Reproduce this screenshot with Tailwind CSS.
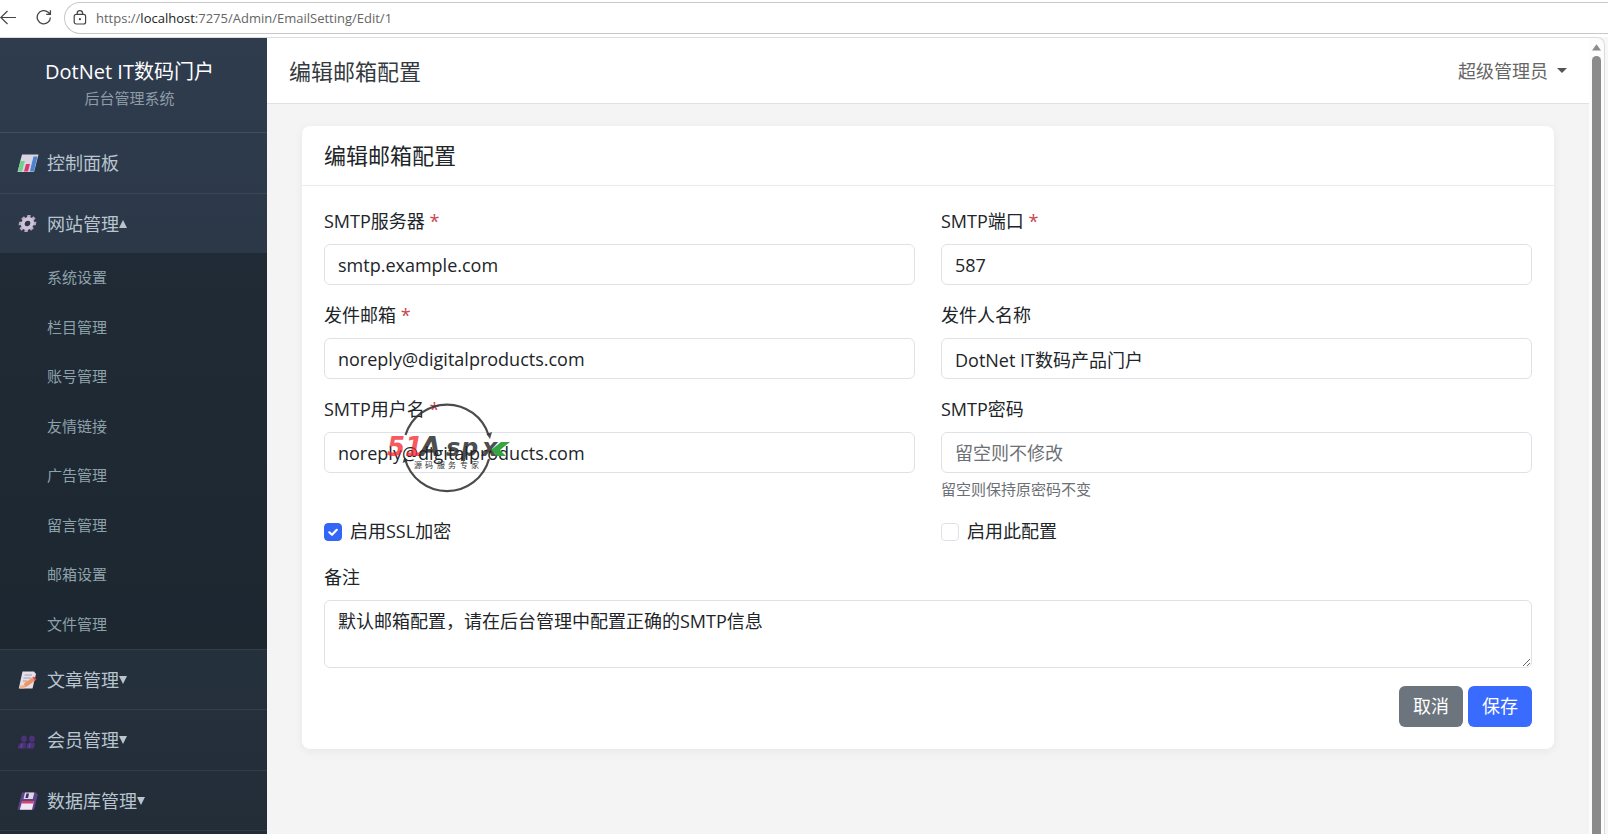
<!DOCTYPE html>
<html lang="zh-CN">
<head>
    <meta charset="UTF-8">
    <meta name="viewport" content="width=device-width, initial-scale=1.0">
    <title>编辑邮箱配置 - DotNet IT数码门户</title>
    <script src="https://cdn.jsdelivr.net/npm/@tailwindcss/browser@4"></script>
    <style>
        body {
            font-family: 'Open Sans', 'Noto Sans CJK SC', sans-serif;
        }
    </style>
</head>
<body class="flex h-screen flex-col overflow-hidden bg-white text-[#212529]">

    <!-- Browser toolbar -->
    <div class="flex h-[37px] shrink-0 items-start pt-[2px]">
        <button type="button" aria-label="Back" class="mt-[7px] h-4 w-4">
            <svg class="h-4 w-4" viewBox="0 0 16 16" fill="none" stroke="#444" stroke-width="1.2"><path d="M16 8.5H0.8M7.5 2L0.8 8.5L7.5 15"/></svg>
        </button>
        <button type="button" aria-label="Refresh" class="mt-[7px] ml-5 h-4 w-4">
            <svg class="h-4 w-4" viewBox="0 0 16 16" fill="none" stroke="#444" stroke-width="1.3"><path d="M14.4 8.5A6.6 6.6 0 1 1 12.2 3.3L14.2 5.2M14.4 1.2V5.4H10.2"/></svg>
        </button>
        <div class="ml-3 flex h-8 flex-1 items-center rounded-l-full border border-r-0 border-[#c8c8c8] pl-[7px]">
            <svg class="h-4 w-4" viewBox="0 0 16 16" fill="none" stroke="#444" stroke-width="1.2"><rect x="2.2" y="4.4" width="11.4" height="9.6" rx="2"/><path d="M5.2 4.4V3.4A2.7 2.7 0 0 1 10.6 3.4V4.4"/><circle cx="7.9" cy="9.2" r="0.5" fill="#444"/></svg>
            <span class="ml-2 text-[13px] leading-5 text-[#666]">https://<span class="text-[#222]">localhost</span>:7275/Admin/EmailSetting/Edit/1</span>
        </div>
    </div>

    <div class="flex min-h-0 flex-1 bg-[#f7f7f7] pr-[3px]">
        <div class="flex min-w-0 flex-1 overflow-hidden rounded-tr-lg border-t border-r border-[#dcdcdc] bg-[#fcfcfc]">

            <!-- Sidebar -->
            <aside class="w-[267px] shrink-0 overflow-hidden bg-linear-to-b from-[#2f3c4e] to-[#222d38] text-lg text-[#b8c5cf]">
                <div class="flex h-[95px] flex-col border-b border-white/10 pt-5 pr-2 text-center">
                    <div class="text-xl leading-7 text-white">DotNet IT数码门户</div>
                    <div class="text-[15px] leading-6 text-[#8f9ca8]">后台管理系统</div>
                </div>
                <nav>
                    <a href="#" class="flex h-[61px] items-center gap-2 border-b border-white/7 pl-[17px]">
                        <svg class="h-[22px] w-[22px]" viewBox="0 0 22 22"><path d="M5 2.5H21.5L17 20H0.5Z" fill="#d9d4e2"/><path d="M3.5 9H7.8L5 19.5H0.8Z" fill="#6fd08a"/><path d="M9 12H13L11 19.5H7Z" fill="#d8386f"/><path d="M16.5 4.5H20.5L16.8 19.5H12.8Z" fill="#4a83cf"/></svg>
                        <span>控制面板</span>
                    </a>
                    <a href="#" class="flex h-[59px] items-center gap-2 pl-[17px]">
                        <svg class="h-[22px] w-[22px]" viewBox="0 0 22 22"><g transform="translate(10.5 10.5) skewX(-10)"><g stroke="#b7a8c6" stroke-width="3.4"><path d="M0 -8.6V8.6M-8.6 0H8.6M-6 -6L6 6M-6 6L6 -6"/></g><circle r="4.6" fill="none" stroke="#cdc2d6" stroke-width="3.6"/><circle r="2.7" fill="#2b3848"/></g></svg>
                        <span>网站管理<span class="mb-1 inline-block h-0 w-0 border-x-4 border-b-8 border-x-transparent border-b-[#b8c5cf] align-middle"></span></span>
                    </a>
                    <div class="grid h-[396px] grid-rows-8 items-center bg-[#141d24]/50 pl-[47px] text-[15px] text-[#8ea1ab]">
                        <a href="#">系统设置</a>
                        <a href="#">栏目管理</a>
                        <a href="#">账号管理</a>
                        <a href="#">友情链接</a>
                        <a href="#">广告管理</a>
                        <a href="#">留言管理</a>
                        <a href="#">邮箱设置</a>
                        <a href="#">文件管理</a>
                    </div>
                    <a href="#" class="flex h-[61px] items-center gap-2 border-y border-white/7 pl-[17px]">
                        <svg class="h-[22px] w-[22px]" viewBox="0 0 22 22"><path d="M5.5 2.5H17L19 5L15.5 19.5H1.8Z" fill="#e6dfe9"/><path d="M7.5 6H15M6.5 9H14M5.8 12H10" stroke="#a79ab5" stroke-width="1"/><path d="M6 18.5L7.5 14L15.5 8.5L18 11.5L10 17.5Z" fill="#ef9560"/><path d="M15.5 8.5L17 7.5L19.5 10.5L18 11.5Z" fill="#d9465d"/><path d="M2.5 17L8 15.5L7.5 19.5H3Z" fill="#f0b48a"/></svg>
                        <span>文章管理<span class="mb-1 inline-block h-0 w-0 border-x-4 border-t-8 border-x-transparent border-t-[#b8c5cf] align-middle"></span></span>
                    </a>
                    <a href="#" class="flex h-[61px] items-center gap-2 border-b border-white/7 pl-[17px]">
                        <svg class="h-[22px] w-[22px]" viewBox="0 0 22 22" fill="#4b3279"><ellipse cx="7" cy="9.8" rx="2.8" ry="3.2"/><ellipse cx="15" cy="9.8" rx="2.8" ry="3.2"/><path d="M2 15Q5 12.5 9 14L8.3 19.5H0.4Z"/><path d="M10 15Q13 12.5 18 14.2L16.8 19.5H9Z"/><path d="M5 14.5L4 19M13 14.5L12 19" stroke="#6242a0" stroke-width="1.4"/></svg>
                        <span>会员管理<span class="mb-1 inline-block h-0 w-0 border-x-4 border-t-8 border-x-transparent border-t-[#b8c5cf] align-middle"></span></span>
                    </a>
                    <a href="#" class="flex h-[60px] items-center gap-2 border-b border-white/7 pl-[17px]">
                        <svg class="h-[22px] w-[22px]" viewBox="0 0 22 22"><path d="M5 2.5H19L20.8 4.5L17 19.8H0.5Z" fill="#5d438a"/><path d="M8 2.5H17.3L15.8 9H6.5Z" fill="#ddd7e6"/><path d="M9.5 3.5H12L11 8H8.4Z" fill="#3d2a66"/><path d="M5.2 11H17L15 19.8H2.8Z" fill="#efe8f4"/><path d="M5.2 11H17L16.4 13.5H4.6Z" fill="#d6456b"/></svg>
                        <span>数据库管理<span class="mb-1 inline-block h-0 w-0 border-x-4 border-t-8 border-x-transparent border-t-[#b8c5cf] align-middle"></span></span>
                    </a>
                </nav>
            </aside>

            <!-- Main content -->
            <main class="min-w-0 flex-1 bg-[#f4f4f4]">
                <header class="flex h-[66px] items-center justify-between border-b border-[#dee2e6] bg-white px-[22px]">
                    <h1 class="text-[22px] leading-8 text-[#343a40]">编辑邮箱配置</h1>
                    <button type="button" class="flex items-center gap-[9px] text-lg text-[#666]">
                        超级管理员
                        <span class="h-0 w-0 border-x-[5px] border-t-[5px] border-x-transparent border-t-[#555]"></span>
                    </button>
                </header>

                <div class="px-[35px] pt-[22px]">
                    <section class="rounded-lg bg-white shadow-[0_2px_10px_rgba(0,0,0,0.06)]">
                        <div class="flex h-[60px] items-center border-b border-[#ebebeb] px-[22px]">
                            <h2 class="text-[22px]">编辑邮箱配置</h2>
                        </div>
                        <form class="px-[22px] py-[22px] text-lg leading-[27px]">
                            <div class="grid grid-cols-2 gap-x-[26px] gap-y-[17px]">
                                <div>
                                    <label for="host" class="mb-[9px] block">SMTP服务器 <span class="text-[#c8454f]">*</span></label>
                                    <input id="host" type="text" value="smtp.example.com" class="block h-[41px] w-full rounded-md border border-[#dee2e6] px-[13px]">
                                </div>
                                <div>
                                    <label for="port" class="mb-[9px] block">SMTP端口 <span class="text-[#c8454f]">*</span></label>
                                    <input id="port" type="text" value="587" class="block h-[41px] w-full rounded-md border border-[#dee2e6] px-[13px]">
                                </div>
                                <div>
                                    <label for="from" class="mb-[9px] block">发件邮箱 <span class="text-[#c8454f]">*</span></label>
                                    <input id="from" type="text" value="noreply@digitalproducts.com" class="block h-[41px] w-full rounded-md border border-[#dee2e6] px-[13px]">
                                </div>
                                <div>
                                    <label for="fromName" class="mb-[9px] block">发件人名称</label>
                                    <input id="fromName" type="text" value="DotNet IT数码产品门户" class="block h-[41px] w-full rounded-md border border-[#dee2e6] px-[13px]">
                                </div>
                                <div class="relative">
                                    <label for="user" class="mb-[9px] block">SMTP用户名 <span class="text-[#c8454f]">*</span></label>
                                    <input id="user" type="text" value="noreply@digitalproducts.com" class="block h-[41px] w-full rounded-md border border-[#dee2e6] px-[13px]">
                                    <!-- Watermark -->
                                    <svg class="pointer-events-none absolute top-[3px] left-[61px] h-[98px] w-[130px]" viewBox="0 0 130 98" font-family="DejaVu Sans, sans-serif" font-weight="bold" font-style="italic">
                                        <g fill="none" stroke="#333" stroke-width="2.2" opacity="0.88"><path d="M20.5 36A43.5 43.5 0 0 1 103.500 36"/><path d="M20 60A43.5 43.5 0 0 0 104 60"/></g>
                                        <path d="M101.5 35L107 33L105 40ZM17.500 64L19.500 58L23 62Z" fill="#333" opacity="0.88"/>
                                        <text x="2" y="57" font-size="26" fill="#f5222d" opacity="0.75">51</text>
                                        <text x="35" y="57" font-size="27" fill="#222" opacity="0.8">A</text>
                                        <text x="61 76 97" y="57" font-size="24" fill="#222" opacity="0.8">spx</text>
                                        <path d="M106 51L116 43H125L115 51L121 57H112Z" fill="#35a544"/>
                                        <text x="29 40 52 63 75 86" y="69" font-size="8" font-family="Noto Sans CJK SC, sans-serif" font-weight="normal" font-style="normal" fill="#333">源码服务专家</text>
                                    </svg>
                                </div>
                                <div>
                                    <label for="password" class="mb-[9px] block">SMTP密码</label>
                                    <input id="password" type="password" placeholder="留空则不修改" class="block h-[41px] w-full rounded-md border border-[#dee2e6] px-[13px] placeholder:text-[#6c7075]">
                                    <p class="mt-1 text-[15px] leading-6 text-[#6c7075]">留空则保持原密码不变</p>
                                </div>
                                <div class="flex items-center gap-2">
                                    <span class="grid place-items-center">
                                        <input id="ssl" type="checkbox" checked class="col-start-1 row-start-1 h-[18px] w-[18px] appearance-none rounded border border-[#dee2e6] checked:border-[#3366f6] checked:bg-[#3366f6]">
                                        <svg class="pointer-events-none col-start-1 row-start-1 h-[18px] w-[18px]" viewBox="0 0 18 18" fill="none" stroke="#fff" stroke-width="2.2" stroke-linecap="round" stroke-linejoin="round"><path d="M5.3 9.3L8 11.8L12.8 6.8"/></svg>
                                    </span>
                                    <label for="ssl">启用SSL加密</label>
                                </div>
                                <div class="flex items-center gap-2">
                                    <input id="enabled" type="checkbox" class="h-[18px] w-[18px] appearance-none rounded border border-[#dee2e6] checked:border-[#3366f6] checked:bg-[#3366f6]">
                                    <label for="enabled">启用此配置</label>
                                </div>
                            </div>

                            <label for="remark" class="mt-[19px] mb-[9px] block">备注</label>
                            <textarea id="remark" rows="2" class="block h-[68px] w-full rounded-md border border-[#dee2e6] px-[13px] py-[7px]">默认邮箱配置，请在后台管理中配置正确的SMTP信息</textarea>

                            <div class="mt-[18px] flex justify-end gap-[5px]">
                                <button type="button" class="h-[41px] rounded-md bg-[#6c757d] px-[14px] text-white">取消</button>
                                <button type="submit" class="h-[41px] rounded-md bg-[#3a6bff] px-[14px] text-white">保存</button>
                            </div>
                        </form>
                    </section>
                </div>
            </main>

            <!-- Scrollbar -->
            <div class="flex w-[15px] shrink-0 flex-col items-center pt-[6px]">
                <svg class="h-[7px] w-[9px]" viewBox="0 0 9 7" fill="#8b8b8b"><path d="M4.5 0.3L9 6.5H0Z"/></svg>
                <div class="mt-[5px] w-[9px] flex-1 rounded-t-full bg-[#8b8b8b]"></div>
            </div>
        </div>
    </div>

</body>
</html>
